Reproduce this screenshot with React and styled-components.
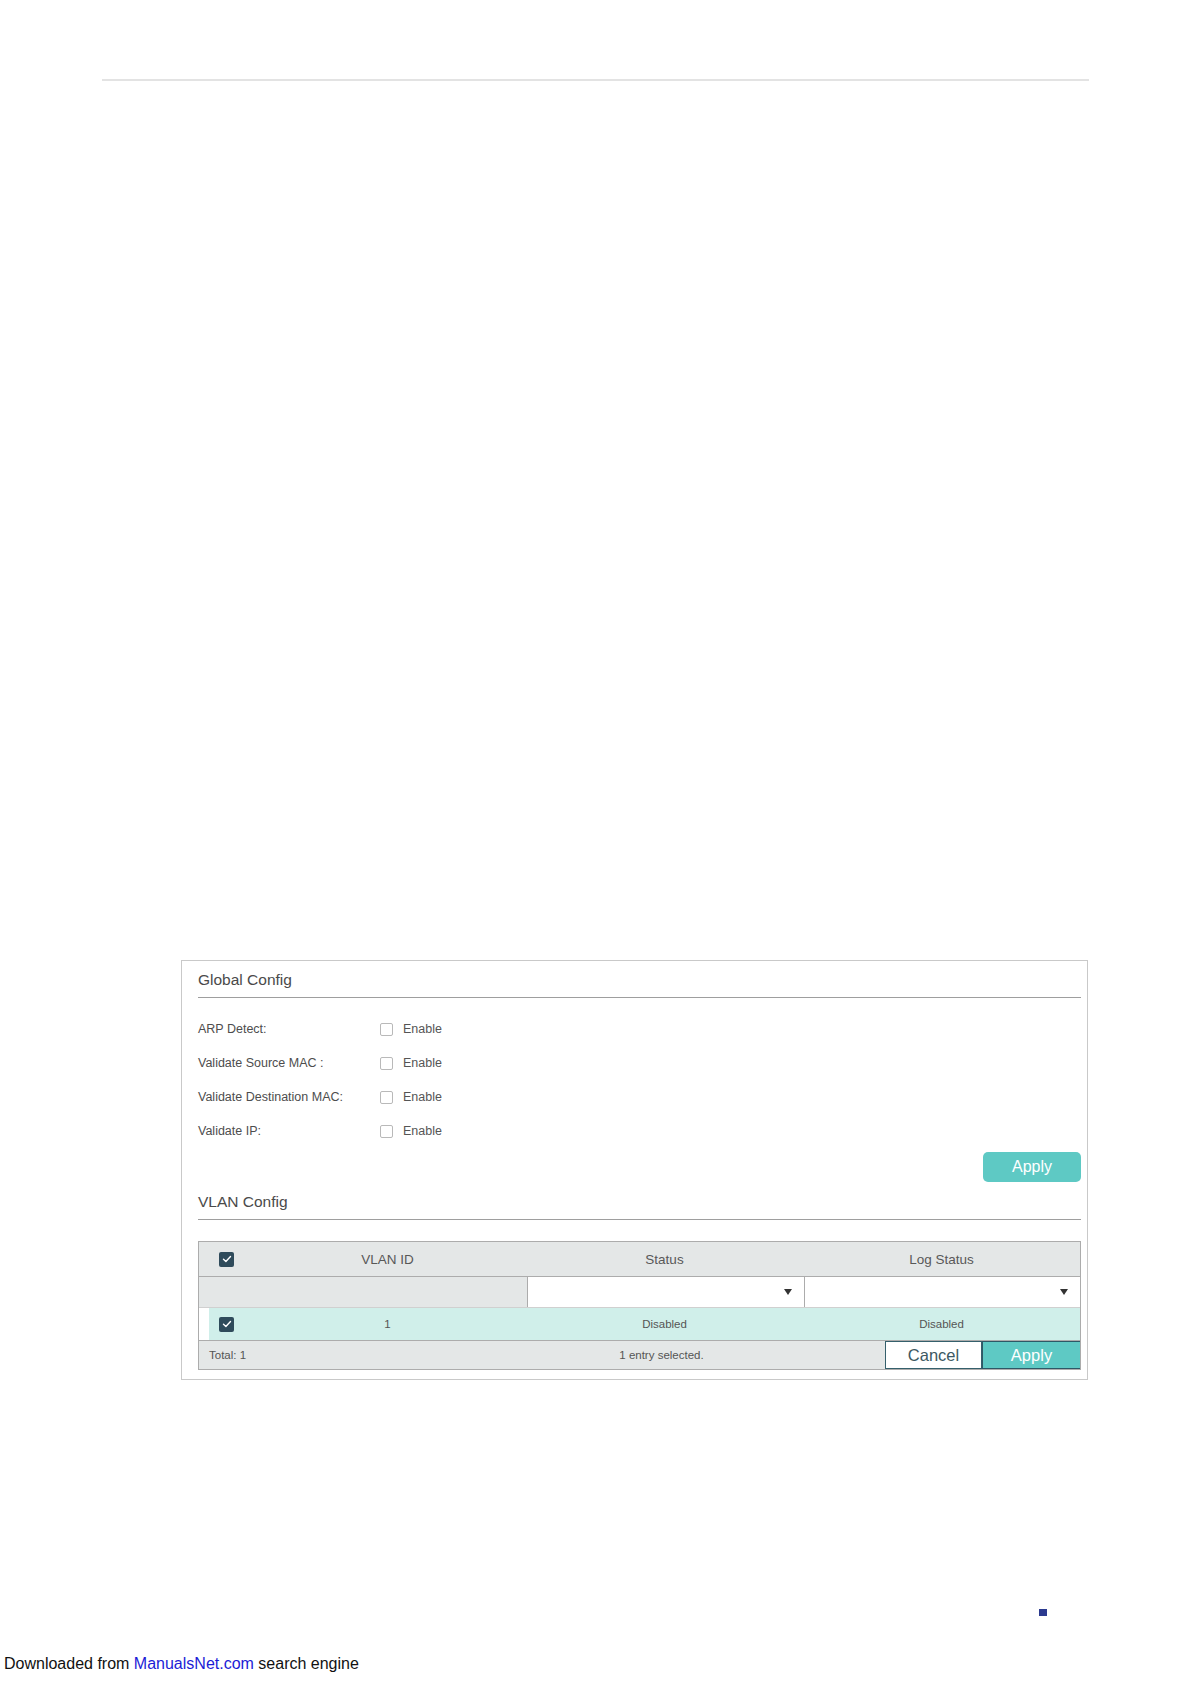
import React from "react";
import styled, { createGlobalStyle } from "styled-components";

const Global = createGlobalStyle`
  html, body { margin: 0; padding: 0; background: #fff; }
  body { font-family: "Liberation Sans", Arial, sans-serif; }
  * { box-sizing: border-box; }
`;

const Page = styled.div`
  width: 1191px;
  height: 1684px;
  position: relative;
  overflow: hidden;
`;

const TopRule = styled.div`
  margin: 79px 0 0 102px;
  width: 987px;
  height: 2px;
  background: #e3e3e3;
`;

const Panel = styled.div`
  margin: 879px 0 0 181px;
  width: 907px;
  border: 1px solid #c9c9c9;
  padding: 0 6px 9px 16px;
`;

const SectionTitle = styled.div`
  padding: ${(p) => p.$top}px 0 ${(p) => p.$bottom}px 0;
  line-height: 24px;
  font-size: 15.5px;
  color: #4a4a4a;
  border-bottom: 1px solid #9e9e9e;
`;

const Form = styled.div`
  margin-top: 14px;
  display: flex;
  flex-direction: column;
`;

const FormRow = styled.div`
  height: 34px;
  display: flex;
  align-items: center;
`;

const Label = styled.div`
  width: 182px;
  font-size: 12.5px;
  color: #4d4d4d;
`;

const Box = styled.span`
  width: 13px;
  height: 13px;
  border: 1px solid #b9b9b9;
  border-radius: 2px;
  background: #fff;
  display: inline-block;
`;

const EnableText = styled.span`
  margin-left: 10px;
  font-size: 12.5px;
  color: #555;
`;

const ApplyRow = styled.div`
  display: flex;
  justify-content: flex-end;
  margin-top: 4px;
`;

const ApplyBtn = styled.button`
  width: 98px;
  height: 30px;
  border: none;
  border-radius: 5px;
  background: #5ec9c4;
  color: #fff;
  font-family: inherit;
  font-size: 16px;
  padding: 0;
`;

const Table = styled.div`
  margin-top: 21px;
  border: 1px solid #acacac;
  width: 100%;
`;

const Grid = styled.div`
  display: grid;
  grid-template-columns: 50px 1fr 1fr 1fr;
  align-items: center;
`;

const HeadRow = styled(Grid)`
  height: 35px;
  background: #e4e7e7;
  border-bottom: 1px solid #acacac;
  font-size: 13.5px;
  color: #585858;
`;

const Cell = styled.div`
  text-align: center;
  padding-right: ${(p) => p.$nudge || 0}px;
`;

const CheckCell = styled.div`
  padding-left: 20px;
  display: flex;
  align-items: center;
`;

const DarkCheck = styled.span`
  width: 15px;
  height: 15px;
  border-radius: 2px;
  background: #2f4b5b;
  display: inline-flex;
  align-items: center;
  justify-content: center;
`;

const FilterRow = styled.div`
  display: grid;
  grid-template-columns: 329px 277px 1fr;
  height: 31px;
  border-bottom: 1px solid #d0d0d0;
`;

const FilterBlank = styled.div`
  background: #e4e7e7;
  border-right: 1px solid #acacac;
`;

const Select = styled.div`
  background: #fff;
  display: flex;
  align-items: center;
  justify-content: flex-end;
  padding-right: 12px;
  border-right: ${(p) => (p.$divider ? "1px solid #acacac" : "none")};
`;

const Caret = styled.span`
  width: 0;
  height: 0;
  border-left: 4.5px solid transparent;
  border-right: 4.5px solid transparent;
  border-top: 6px solid #333;
`;

const DataRow = styled.div`
  height: 33px;
  padding-left: 10px;
  background: #fff;
  border-bottom: 1px solid #acacac;
`;

const DataInner = styled(Grid)`
  grid-template-columns: 40px 1fr 1fr 1fr;
  height: 100%;
  background: #d0efea;
  font-size: 11.5px;
  color: #555;
`;

const DataCheck = styled(CheckCell)`
  padding-left: 10px;
`;

const Footer = styled.div`
  display: grid;
  grid-template-columns: 329px 277px 1fr;
  height: 28px;
  background: #e4e7e7;
  align-items: center;
  font-size: 11.5px;
  color: #555;
`;

const Total = styled.div`
  padding-left: 10px;
`;

const Buttons = styled.div`
  display: flex;
  justify-content: flex-end;
  height: 100%;
`;

const FootBtn = styled.button`
  width: ${(p) => p.$w}px;
  height: 28px;
  margin: 0;
  padding: 0;
  font-family: inherit;
  font-size: 16.5px;
  border: 1px solid ${(p) => (p.$primary ? "#2e5866" : "#35606c")};
  border-right: ${(p) => (p.$primary ? "none" : "1px solid #35606c")};
  background: ${(p) => (p.$primary ? "#5ec9c4" : "#fff")};
  color: ${(p) => (p.$primary ? "#fff" : "#3c5862")};
`;

const Marker = styled.div`
  margin: 229px 0 0 1039px;
  width: 8px;
  height: 7px;
  background: #2b3a8f;
`;

const Credit = styled.div`
  margin: 38px 0 0 4px;
  line-height: 20px;
  font-size: 16px;
  color: #111;
`;

const CreditLink = styled.span`
  color: #1c1cd6;
`;

const Tick = () => (
  <svg width="10" height="8" viewBox="0 0 10 8" fill="none">
    <path d="M1.5 4.2 L3.9 6.4 L8.5 1.6" stroke="#fff" strokeWidth="1.4" strokeLinecap="round" strokeLinejoin="round" />
  </svg>
);

const rows = [
  "ARP Detect:",
  "Validate Source MAC :",
  "Validate Destination MAC:",
  "Validate IP:",
];

export default function App() {
  return (
    <Page>
      <Global />
      <TopRule />
      <Panel>
        <SectionTitle $top={7} $bottom={5}>Global Config</SectionTitle>
        <Form>
          {rows.map((r) => (
            <FormRow key={r}>
              <Label>{r}</Label>
              <Box />
              <EnableText>Enable</EnableText>
            </FormRow>
          ))}
        </Form>
        <ApplyRow>
          <ApplyBtn>Apply</ApplyBtn>
        </ApplyRow>
        <SectionTitle $top={8} $bottom={5}>VLAN Config</SectionTitle>
        <Table>
          <HeadRow>
            <CheckCell>
              <DarkCheck><Tick /></DarkCheck>
            </CheckCell>
            <Cell>VLAN ID</Cell>
            <Cell>Status</Cell>
            <Cell>Log Status</Cell>
          </HeadRow>
          <FilterRow>
            <FilterBlank />
            <Select $divider><Caret /></Select>
            <Select><Caret /></Select>
          </FilterRow>
          <DataRow>
            <DataInner>
              <DataCheck>
                <DarkCheck><Tick /></DarkCheck>
              </DataCheck>
              <Cell>1</Cell>
              <Cell>Disabled</Cell>
              <Cell>Disabled</Cell>
            </DataInner>
          </DataRow>
          <Footer>
            <Total>Total: 1</Total>
            <Cell $nudge={10}>1 entry selected.</Cell>
            <Buttons>
              <FootBtn $w={97}>Cancel</FootBtn>
              <FootBtn $w={98} $primary>Apply</FootBtn>
            </Buttons>
          </Footer>
        </Table>
      </Panel>
      <Marker />
      <Credit>
        Downloaded from <CreditLink>ManualsNet.com</CreditLink> search engine
      </Credit>
    </Page>
  );
}
